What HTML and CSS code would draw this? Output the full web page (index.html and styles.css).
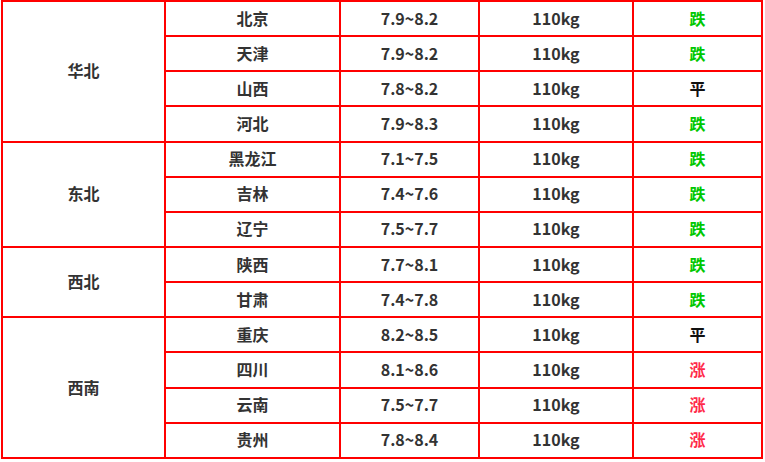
FILE: index.html
```html
<!DOCTYPE html>
<html lang="zh-CN">
<head>
<meta charset="utf-8">
<title>猪价</title>
<link rel="stylesheet" href="styles.css">
</head>
<body>
<table class="price">
  <colgroup>
    <col class="c1"><col class="c2"><col class="c3"><col class="c4"><col class="c5">
  </colgroup>
  <tbody>
    <tr><td rowspan="4">华北</td><td>北京</td><td>7.9~8.2</td><td>110kg</td><td class="down">跌</td></tr>
    <tr><td>天津</td><td>7.9~8.2</td><td>110kg</td><td class="down">跌</td></tr>
    <tr><td>山西</td><td>7.8~8.2</td><td>110kg</td><td class="flat">平</td></tr>
    <tr><td>河北</td><td>7.9~8.3</td><td>110kg</td><td class="down">跌</td></tr>
    <tr><td rowspan="3">东北</td><td>黑龙江</td><td>7.1~7.5</td><td>110kg</td><td class="down">跌</td></tr>
    <tr><td>吉林</td><td>7.4~7.6</td><td>110kg</td><td class="down">跌</td></tr>
    <tr><td>辽宁</td><td>7.5~7.7</td><td>110kg</td><td class="down">跌</td></tr>
    <tr><td rowspan="2">西北</td><td>陕西</td><td>7.7~8.1</td><td>110kg</td><td class="down">跌</td></tr>
    <tr><td>甘肃</td><td>7.4~7.8</td><td>110kg</td><td class="down">跌</td></tr>
    <tr><td rowspan="4">西南</td><td>重庆</td><td>8.2~8.5</td><td>110kg</td><td class="flat">平</td></tr>
    <tr><td>四川</td><td>8.1~8.6</td><td>110kg</td><td class="up">涨</td></tr>
    <tr><td>云南</td><td>7.5~7.7</td><td>110kg</td><td class="up">涨</td></tr>
    <tr><td>贵州</td><td>7.8~8.4</td><td>110kg</td><td class="up">涨</td></tr>
  </tbody>
</table>
</body>
</html>
```
FILE: styles.css
```css
html, body {
  margin: 0;
  padding: 0;
  background: #fff;
}
body {
  padding-left: 1px;
}
.price {
  border-collapse: separate;
  border-spacing: 0;
  table-layout: fixed;
  width: 762px;
  border-top: 2px solid #ff0000;
  border-left: 2px solid #ff0000;
  font-family: "Noto Sans CJK SC", "Noto Sans", sans-serif;
  font-weight: bold;
  font-size: 16px;
  color: #333;
}
.c1 { width: 163px; }
.c2 { width: 175px; }
.c3 { width: 139px; }
.c4 { width: 154px; }
.c5 { width: 129px; }
.price td {
  box-sizing: border-box;
  height: 35.15px;
  padding: 0 0 2px;
  text-align: center;
  vertical-align: middle;
  border-right: 2px solid #ff0000;
  border-bottom: 2px solid #ff0000;
  line-height: 20px;
}
.price td.down { color: #00c800; }
.price td.up { color: #ff2a4a; }
.price td.flat { color: #111; }
```
